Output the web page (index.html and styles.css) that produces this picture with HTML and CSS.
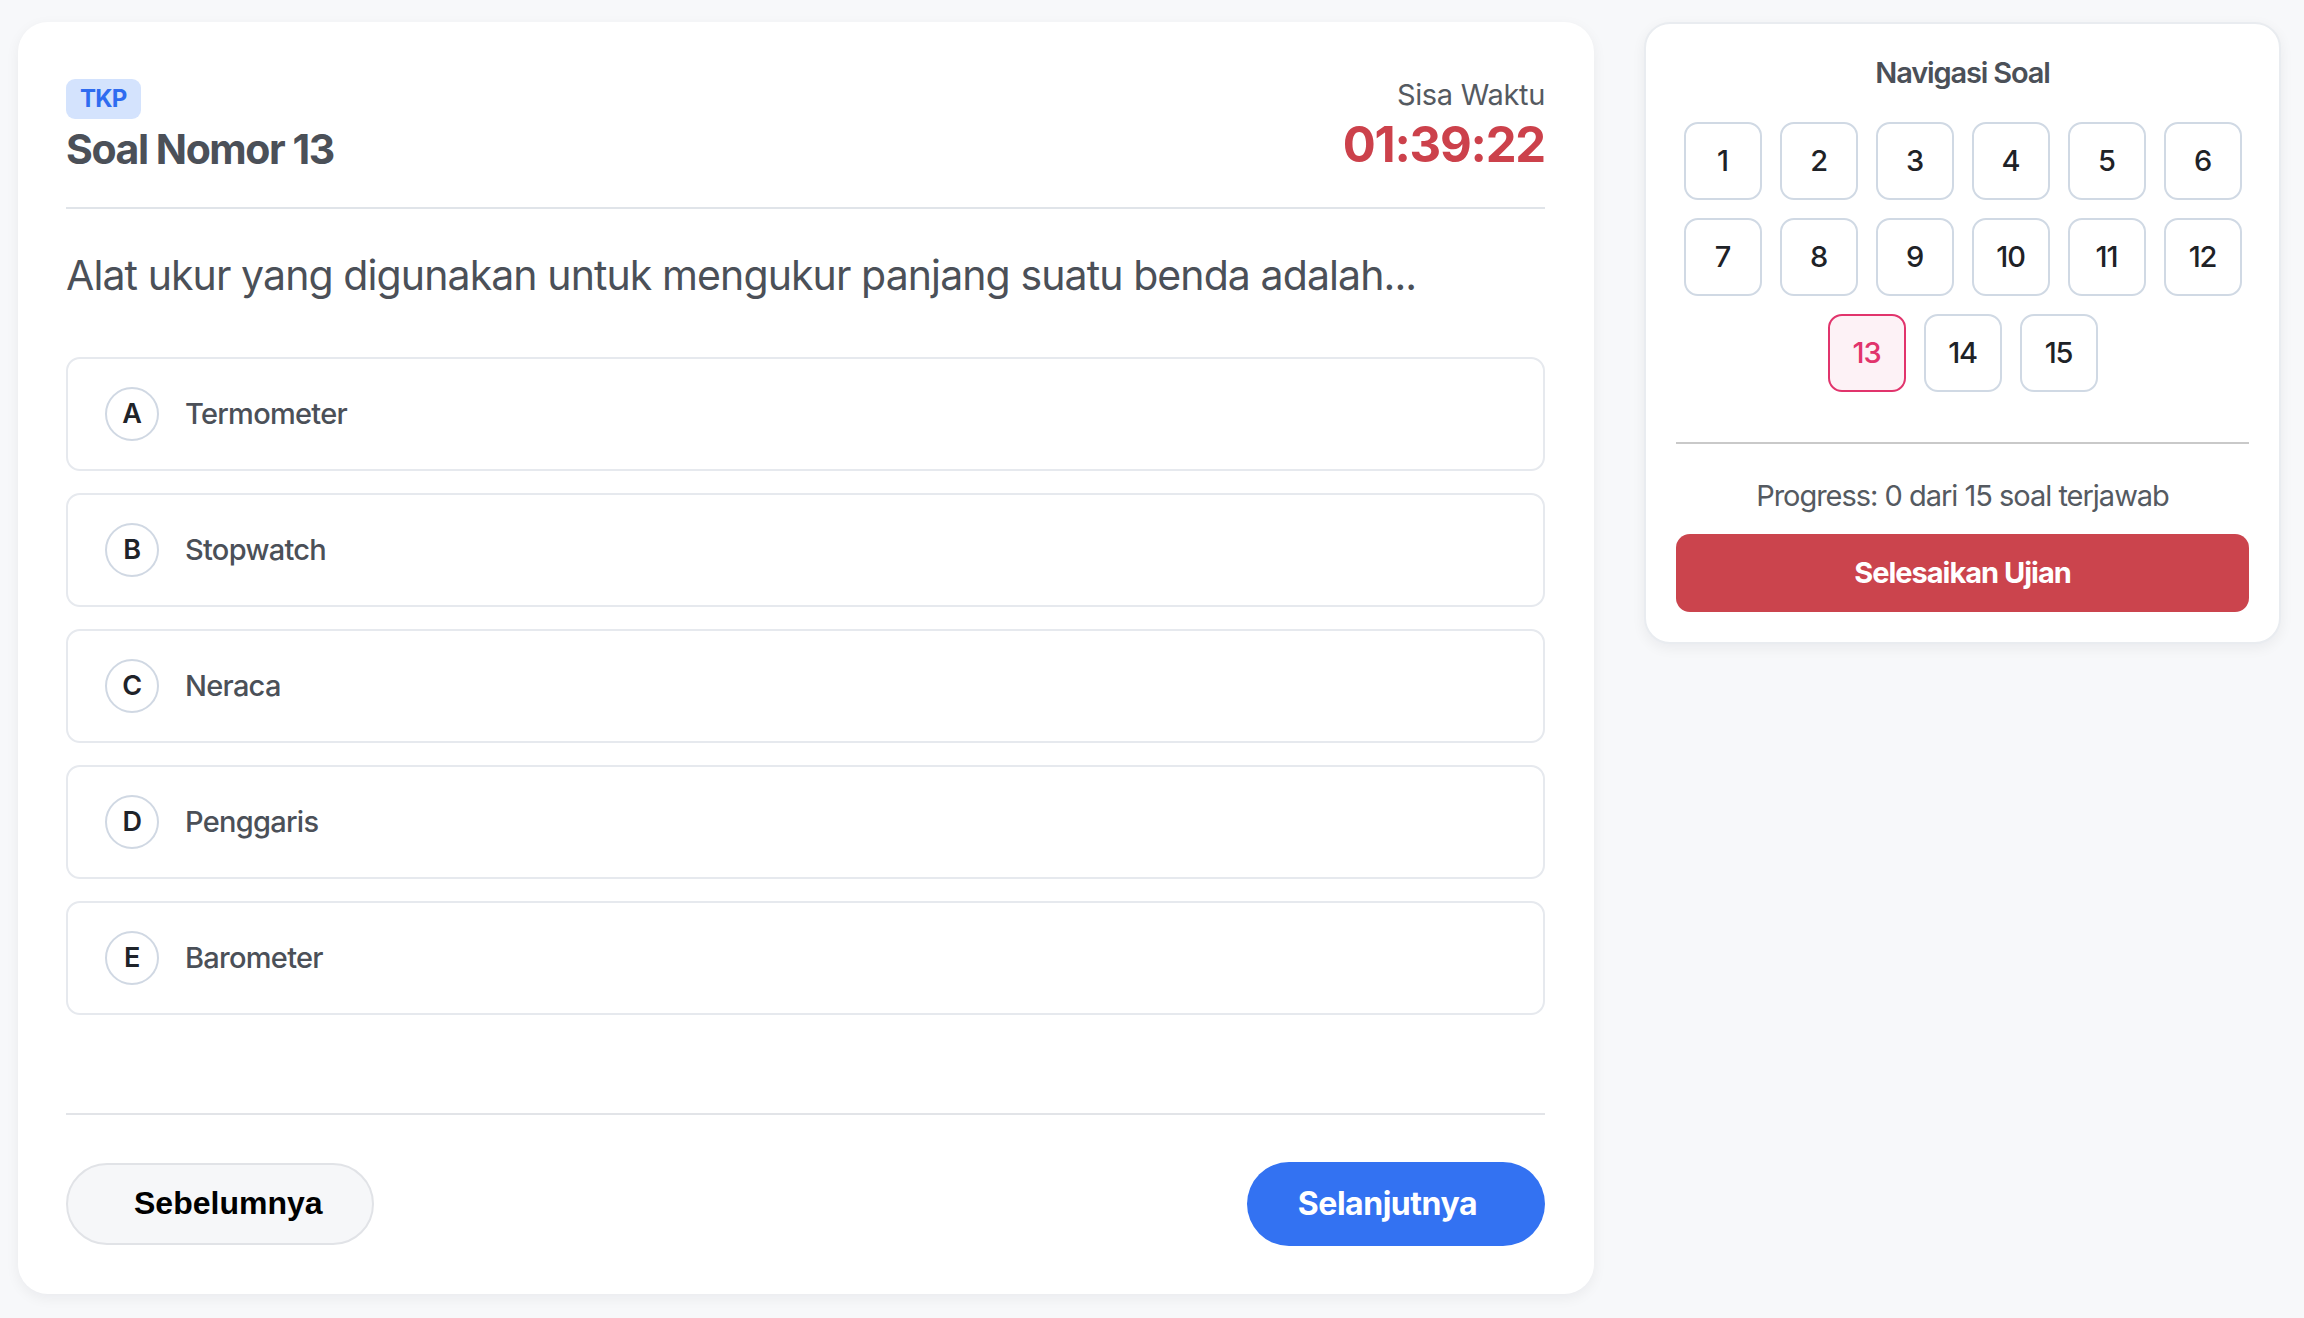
FILE: index.html
```html
<!DOCTYPE html>
<html lang="id">
<head>
<meta charset="utf-8">
<title>Ujian - Soal Nomor 13</title>
<link rel="stylesheet" href="styles.css">
</head>
<body>
<div class="page">
  <main class="card quiz">
    <header class="quiz-head">
      <div class="head-left">
        <span class="badge">TKP</span>
        <h1 class="title">Soal Nomor 13</h1>
      </div>
      <div class="timer">
        <div class="timer-label">Sisa Waktu</div>
        <div class="timer-value">01:39:22</div>
      </div>
    </header>
    <p class="question">Alat ukur yang digunakan untuk mengukur panjang suatu benda adalah...</p>
    <ul class="options">
      <li class="option"><span class="letter">A</span><span class="option-text">Termometer</span></li>
      <li class="option"><span class="letter">B</span><span class="option-text">Stopwatch</span></li>
      <li class="option"><span class="letter">C</span><span class="option-text">Neraca</span></li>
      <li class="option"><span class="letter">D</span><span class="option-text">Penggaris</span></li>
      <li class="option"><span class="letter">E</span><span class="option-text">Barometer</span></li>
    </ul>
    <footer class="quiz-foot">
      <button class="btn btn-prev">Sebelumnya</button>
      <button class="btn btn-next">Selanjutnya</button>
    </footer>
  </main>
  <aside class="card nav">
    <h2 class="nav-title">Navigasi Soal</h2>
    <div class="nav-grid">
      <button class="num">1</button>
      <button class="num">2</button>
      <button class="num">3</button>
      <button class="num">4</button>
      <button class="num">5</button>
      <button class="num">6</button>
      <button class="num">7</button>
      <button class="num">8</button>
      <button class="num">9</button>
      <button class="num">10</button>
      <button class="num">11</button>
      <button class="num">12</button>
      <button class="num num-active">13</button>
      <button class="num">14</button>
      <button class="num">15</button>
    </div>
    <hr class="nav-divider">
    <p class="progress">Progress: 0 dari 15 soal terjawab</p>
    <button class="btn-finish">Selesaikan Ujian</button>
  </aside>
</div>
</body>
</html>
```
FILE: styles.css
```css
* { box-sizing: border-box; }
html, body { margin: 0; padding: 0; }
body {
  background: #f7f8fa;
  font-family: Inter, "Noto Sans", "Liberation Sans", sans-serif;
  color: #4b5058;
  letter-spacing: -0.02em;
}
.page {
  display: flex;
  align-items: flex-start;
  gap: 50px;
  padding: 22px 23px 24px 18px;
}
.card {
  background: #ffffff;
}
.quiz {
  flex: none;
  width: 1576px;
  border-radius: 30px;
  padding: 56px 49px 48px 48px;
  box-shadow: 0 4px 14px rgba(15, 23, 42, 0.06);
}
.quiz-head {
  display: flex;
  justify-content: space-between;
  align-items: flex-end;
  padding-bottom: 32px;
  border-bottom: 2px solid #e0e4e9;
}
.head-left { display: flex; flex-direction: column; align-items: flex-start; }
.badge {
  display: inline-block;
  height: 40px;
  line-height: 40px;
  padding: 0 14px;
  border-radius: 9px;
  background: #d4e3fd;
  color: #2f6cf0;
  font-size: 24px;
  font-weight: 700;
  letter-spacing: -0.03em;
}
.title {
  margin: 6px 0 0;
  font-size: 41px;
  line-height: 1.2;
  font-weight: 700;
  color: #4b5058;
  letter-spacing: -0.035em;
}
.timer { text-align: right; }
.timer-label {
  font-size: 29px;
  line-height: 1.2;
  margin-bottom: 3px;
  color: #555a61;
}
.timer-value {
  font-size: 49px;
  line-height: 1.2;
  font-weight: 700;
  color: #cc414b;
  letter-spacing: -0.025em;
}
.question {
  margin: 42px 0 57px;
  font-size: 41px;
  line-height: 1.2;
  font-weight: 400;
  color: #4b5058;
  letter-spacing: -0.022em;
}
.options {
  list-style: none;
  margin: 0;
  padding: 0;
  display: flex;
  flex-direction: column;
  gap: 22px;
}
.option {
  display: flex;
  align-items: center;
  gap: 26px;
  padding: 28px 37px;
  border: 2px solid #e6e9ee;
  border-radius: 14px;
  background: #fff;
}
.letter {
  flex: none;
  width: 54px;
  height: 54px;
  border: 2px solid #d0d8e3;
  border-radius: 50%;
  display: flex;
  align-items: center;
  justify-content: center;
  font-size: 27px;
  font-weight: 600;
  color: #1f2329;
}
.option-text {
  font-size: 29px;
  font-weight: 500;
  color: #4b5058;
  letter-spacing: -0.025em;
}
.quiz-foot {
  margin-top: 98px;
  padding-top: 47px;
  border-top: 2px solid #e2e4e8;
  display: flex;
  justify-content: space-between;
  align-items: center;
}
.btn {
  border-radius: 999px;
  cursor: pointer;
  font-weight: 700;
}
.btn-prev {
  height: 82px;
  padding: 0 49px 0 66px;
  background: #f6f7f9;
  border: 2px solid #e1e3e7;
  color: #000;
  font-family: "Liberation Sans", Arial, sans-serif;
  font-size: 32px;
  letter-spacing: 0;
}
.btn-next {
  height: 84px;
  padding: 0 68px 0 51px;
  background: #3372f2;
  border: none;
  color: #fff;
  font-family: Inter, "Noto Sans", sans-serif;
  font-size: 32px;
  letter-spacing: -0.015em;
}
.nav {
  flex: none;
  width: 637px;
  border: 2px solid #e9ecf0;
  border-radius: 26px;
  padding: 32px 30px 30px;
  box-shadow: 0 4px 14px rgba(15, 23, 42, 0.06);
}
.nav-title {
  margin: 0;
  text-align: center;
  font-size: 29px;
  line-height: 1.2;
  font-weight: 600;
  color: #4b5058;
  letter-spacing: -0.04em;
}
.nav-grid {
  margin-top: 31px;
  display: flex;
  flex-wrap: wrap;
  justify-content: center;
  gap: 18px;
}
.num {
  width: 78px;
  height: 78px;
  border: 2px solid #d0d9e4;
  border-radius: 14px;
  background: #fff;
  font-family: Inter, "Noto Sans", sans-serif;
  font-size: 29px;
  font-weight: 500;
  color: #1e2227;
  letter-spacing: -0.04em;
  cursor: pointer;
}
.num-active {
  border-color: #e1346c;
  background: #fdf2f6;
  color: #e1346c;
}
.nav-divider {
  margin: 50px 0 0;
  border: none;
  border-top: 2px solid #c9c9c9;
}
.progress {
  margin: 35px 0 0;
  text-align: center;
  font-size: 29px;
  line-height: 1.2;
  color: #555a61;
  letter-spacing: -0.035em;
}
.btn-finish {
  display: block;
  width: 100%;
  height: 78px;
  margin-top: 20px;
  border: none;
  border-radius: 14px;
  background: #cb444d;
  color: #fff;
  font-family: Inter, "Noto Sans", sans-serif;
  font-size: 29px;
  font-weight: 700;
  letter-spacing: -0.035em;
  cursor: pointer;
}
```
